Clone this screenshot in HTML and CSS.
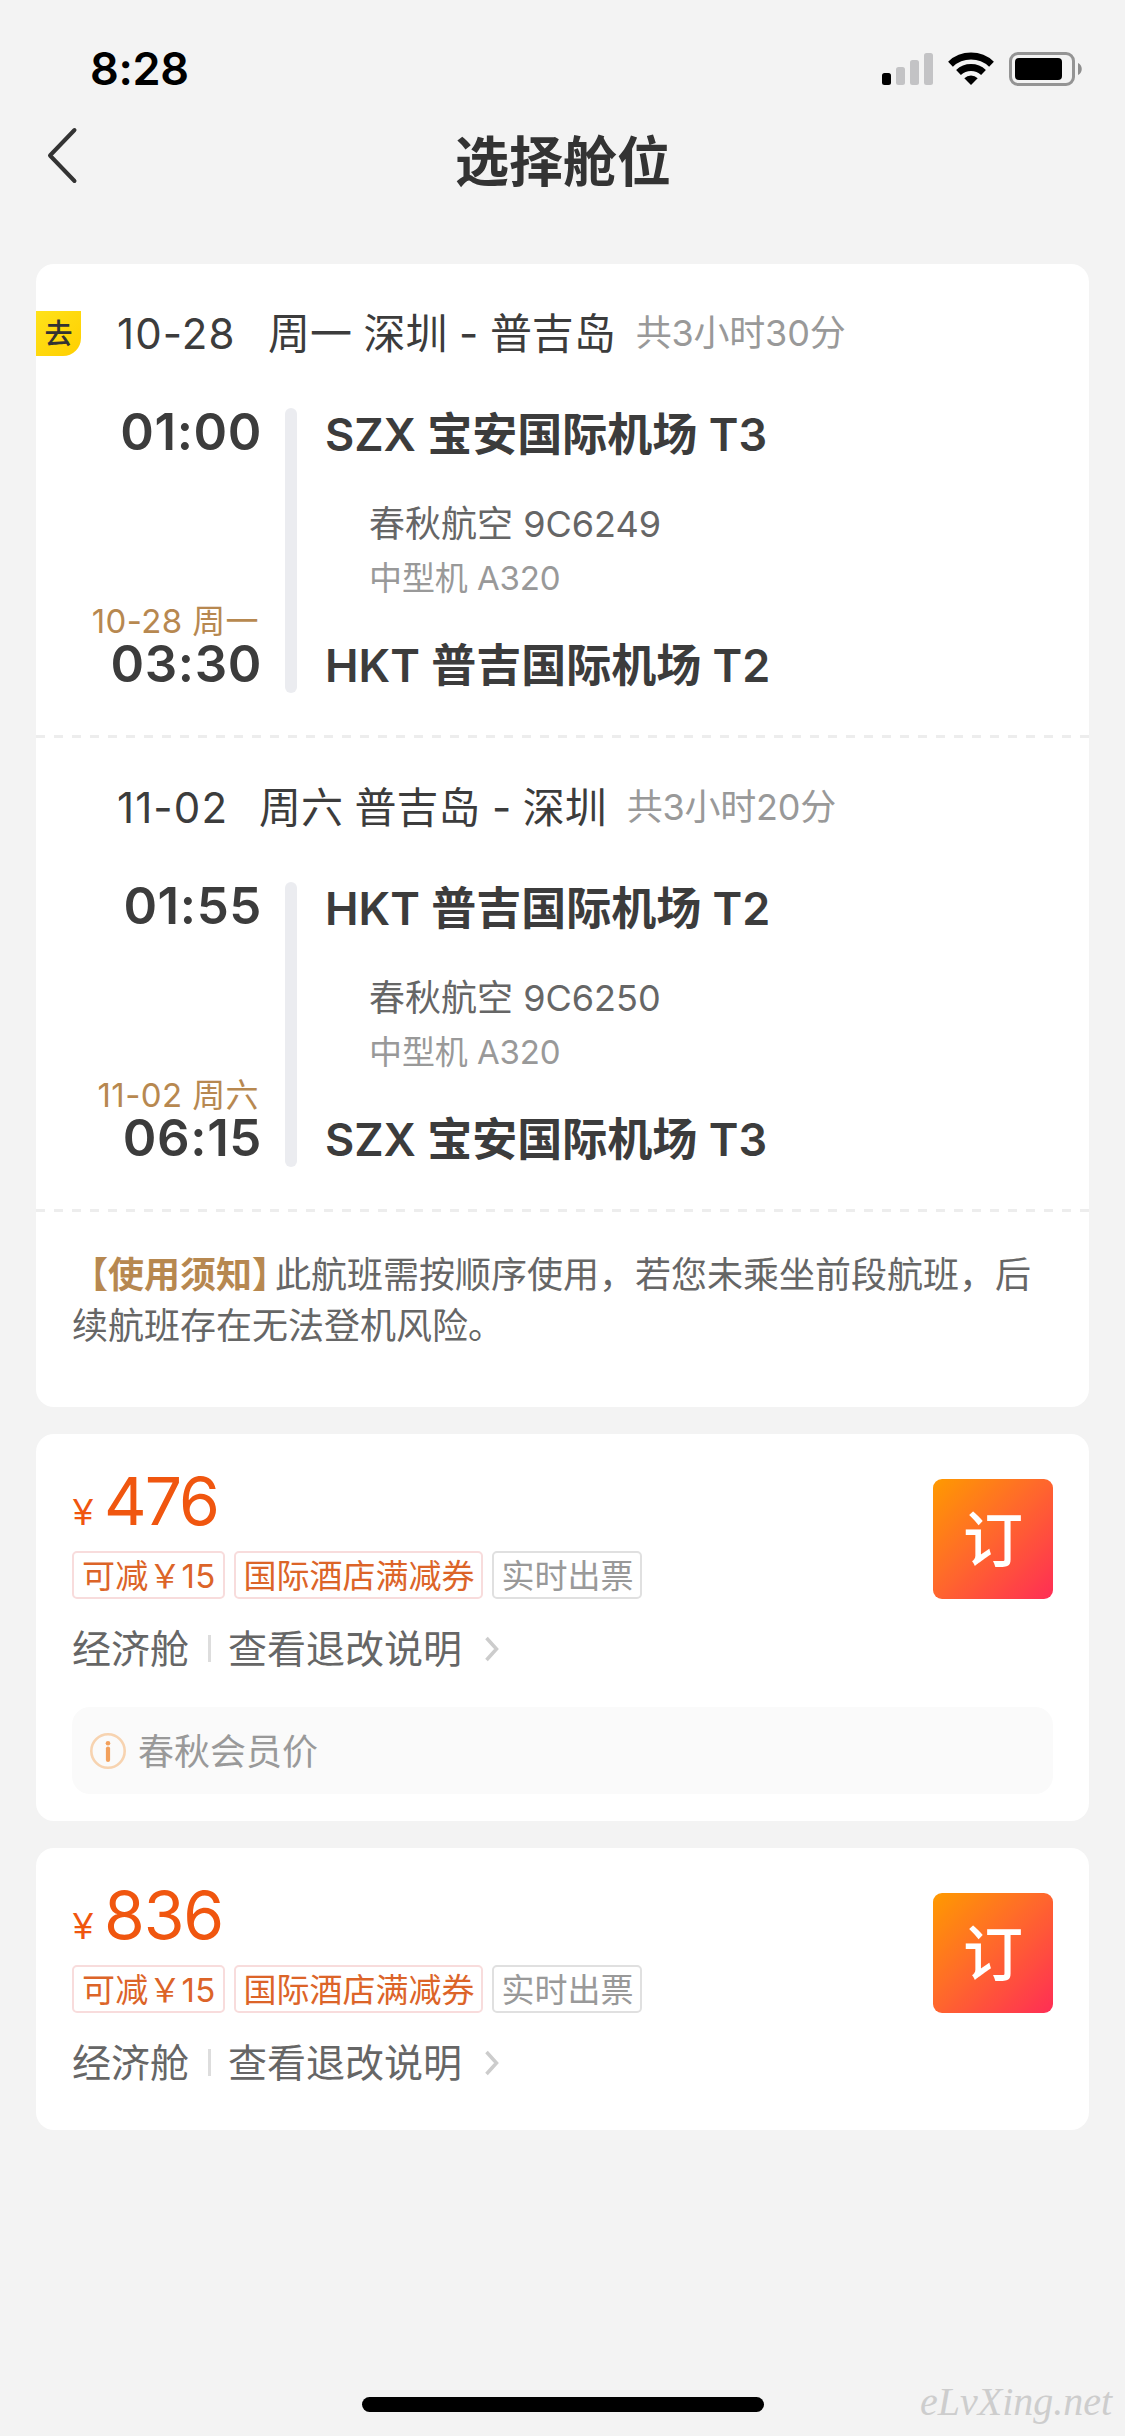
FILE: index.html
```html
<!DOCTYPE html>
<html lang="zh-CN">
<head>
<meta charset="utf-8">
<title>选择舱位</title>
<link rel="stylesheet" href="styles.css">
</head>
<body>
<div class="status-bar">
  <span class="clock">8:28</span>
  <svg class="status-icons" width="202" height="36" viewBox="0 0 202 36">
    <rect x="0" y="21" width="9" height="12" rx="2.5"/>
    <g fill="#c3c3c5">
      <rect x="14" y="15" width="9" height="18" rx="2.5"/>
      <rect x="28" y="8" width="9" height="25" rx="2.5"/>
      <rect x="42" y="1" width="9" height="32" rx="2.5"/>
    </g>
    <g fill="none" stroke="#000" stroke-width="7">
      <path d="M68.5 12.2A30 30 0 0 1 109.500 12.200"/>
      <path d="M76.500 20.500A18.300 18.300 0 0 1 101.500 20.500"/>
    </g>
    <path d="M82.300 26.200A10 10 0 0 1 95.700 26.200L89 33Z"/>
    <rect x="128.500" y="1.500" width="63" height="31" rx="7.500" fill="none" stroke="#949494" stroke-width="3"/>
    <rect x="133" y="6" width="47" height="22" rx="4"/>
    <path d="M196 11C201 13 201 21 196 23Z" fill="#8e8e8e"/>
  </svg>
</div>
<header class="nav-bar">
  <svg class="back" width="32" height="58" viewBox="0 0 32 58"><path d="M28.500 3L4 28.500L28.500 54" fill="none" stroke="#333" stroke-width="4" stroke-linecap="round" stroke-linejoin="round"/></svg>
  <h1 class="title">选择舱位</h1>
</header>
<main class="cards">
  <section class="card">
    <article class="flight">
      <div class="flight-head">
        <span class="badge">去</span>
        <span class="date">10-28</span>
        <span class="route">周一 深圳 - 普吉岛</span>
        <span class="duration">共3小时30分</span>
      </div>
      <div class="flight-body">
        <div class="times">
          <span class="time">01:00</span>
          <span class="arrive-date">10-28 周一</span>
          <span class="time">03:30</span>
        </div>
        <div class="rail"></div>
        <div class="stops">
          <span class="airport">SZX 宝安国际机场 T3</span>
          <span class="airline">春秋航空 9C6249</span>
          <span class="plane">中型机 A320</span>
          <span class="airport">HKT 普吉国际机场 T2</span>
        </div>
      </div>
    </article>
    <article class="flight">
      <div class="flight-head">
        <span class="date return">11-02</span>
        <span class="route">周六 普吉岛 - 深圳</span>
        <span class="duration">共3小时20分</span>
      </div>
      <div class="flight-body">
        <div class="times">
          <span class="time">01:55</span>
          <span class="arrive-date">11-02 周六</span>
          <span class="time">06:15</span>
        </div>
        <div class="rail"></div>
        <div class="stops">
          <span class="airport">HKT 普吉国际机场 T2</span>
          <span class="airline">春秋航空 9C6250</span>
          <span class="plane">中型机 A320</span>
          <span class="airport">SZX 宝安国际机场 T3</span>
        </div>
      </div>
    </article>
    <p class="notice"><b>【使用须知<span class="close">】</span></b>此航班需按顺序使用，若您未乘坐前段航班，后<br>续航班存在无法登机风险。</p>
  </section>

  <section class="card fare">
    <div class="fare-main">
      <div class="fare-info">
        <div class="price"><span class="yen">¥</span><span class="amount seven">476</span></div>
        <div class="tags"><span class="tag wide">可减￥15</span><span class="tag">国际酒店满减券</span><span class="tag plain">实时出票</span></div>
      </div>
      <button class="book">订</button>
    </div>
    <div class="rules"><span>经济舱</span><i class="divider"></i><span>查看退改说明</span><svg class="more" width="16" height="28" viewBox="0 0 16 28"><path d="M2.500 3L12.500 14L2.500 25" fill="none" stroke="#ccc" stroke-width="3.500"/></svg></div>
    <div class="member">
      <svg width="36" height="36" viewBox="0 0 36 36"><circle cx="18" cy="18" r="16.700" fill="none" stroke="#f7d3b0" stroke-width="2.600"/><circle cx="18" cy="10.200" r="2.300" fill="#f2a05c"/><path d="M18 15.500V27" stroke="#f2a05c" stroke-width="4.200" stroke-linecap="round"/></svg>
      <span class="member-label">春秋会员价</span>
    </div>
  </section>

  <section class="card fare">
    <div class="fare-main">
      <div class="fare-info">
        <div class="price"><span class="yen">¥</span><span class="amount">836</span></div>
        <div class="tags"><span class="tag wide">可减￥15</span><span class="tag">国际酒店满减券</span><span class="tag plain">实时出票</span></div>
      </div>
      <button class="book">订</button>
    </div>
    <div class="rules"><span>经济舱</span><i class="divider"></i><span>查看退改说明</span><svg class="more" width="16" height="28" viewBox="0 0 16 28"><path d="M2.500 3L12.500 14L2.500 25" fill="none" stroke="#ccc" stroke-width="3.500"/></svg></div>
  </section>
</main>
<footer class="bottom">
  <div class="home-indicator"></div>
  <span class="watermark">eLvXing.net</span>
</footer>
</body>
</html>
```
FILE: styles.css
```css
* { box-sizing: border-box; }

body {
  margin: 0;
  width: 1125px;
  height: 2436px;
  display: flex;
  flex-direction: column;
  background: #f3f3f3;
  color: #3c3c3c;
  font-family: Inter, "Noto Sans CJK SC", sans-serif;
  white-space: nowrap;
  overflow: hidden;
}

.status-bar {
  height: 120px;
  padding: 39px 41px 0 90px;
  display: flex;
  justify-content: space-between;
}
.clock { color: #000; font-size: 45px; font-weight: 600; line-height: 60px; letter-spacing: -0.3px; }
.status-icons { margin-top: 13px; }

.nav-bar {
  height: 144px;
  padding: 7px 45px 0 46px;
  display: grid;
  grid-template-columns: 32px 1fr 32px;
  align-items: start;
}
.title {
  margin: 0;
  padding-top: 6px;
  font-size: 54px;
  font-weight: 700;
  line-height: 60px;
  text-align: center;
  color: #333;
}

.cards { display: flex; flex-direction: column; gap: 27px; padding: 0 36px; }
.card { background: #fff; border-radius: 18px; overflow: hidden; }

/* flight legs */
.flight {
  height: 474px;
  padding-bottom: 3px;
  background: repeating-linear-gradient(90deg, #ededed 0 9px, transparent 9px 18px) left bottom / 100% 3px no-repeat;
}
.flight-head { height: 141px; padding-top: 47px; display: flex; align-items: flex-start; line-height: 45px; }
.badge {
  width: 45px;
  height: 45px;
  border-radius: 0 0 18px 0;
  background: linear-gradient(135deg, #ffe21a, #ffcf00);
  color: #333;
  font-size: 28px;
  font-weight: 500;
  line-height: 46px;
  text-align: center;
}
.date { width: 151px; margin-left: 36px; font-size: 42px; letter-spacing: 1.1px; }
.date.return { width: 142px; margin-left: 81px; }
.route { font-size: 42px; letter-spacing: -0.1px; }
.duration { margin-left: 20px; font-size: 36px; letter-spacing: -0.2px; color: #999; }

.flight-body { height: 291px; display: flex; }
.times { width: 226px; padding-top: 2px; display: flex; flex-direction: column; align-items: flex-end; }
.time { font-size: 51px; font-weight: 600; line-height: 50px; letter-spacing: 0.6px; }
.arrive-date { margin: 143px 3px 0 0; font-size: 33px; line-height: 42px; height: 39px; letter-spacing: 0.4px; color: #b78850; }
.rail { width: 12px; height: 285px; margin: 3px 28px 0 23px; border-radius: 6px; background: #ebecf0; }
.stops { display: flex; flex-direction: column; padding-top: 5px; }
.airport { font-size: 45px; font-weight: 600; line-height: 50px; }
.airline { margin: 37px 0 0 44px; font-size: 36px; line-height: 54px; color: #666; }
.plane { margin: 0 0 36px 44px; font-size: 33px; line-height: 54px; letter-spacing: -0.1px; color: #999; }

.notice { height: 195px; margin: 0; padding: 38px 36px 0; font-size: 36px; line-height: 51px; color: #666; }
.notice b { font-weight: 700; color: #b78850; }
.close { letter-spacing: -13px; }

/* fares */
.fare { padding: 0 36px; }
.fare-main { height: 165px; display: flex; justify-content: space-between; }
.price { height: 117px; padding-top: 27px; display: flex; align-items: baseline; color: #f0560f; line-height: 80px; }
.yen { width: 32px; padding-left: 1px; font-family: "Liberation Sans", sans-serif; font-size: 36px; }
.amount { font-size: 66px; letter-spacing: -1.2px; }
.amount.seven { letter-spacing: -2px; }
.tags { display: flex; gap: 9px; }
.tag {
  height: 48px;
  padding: 0 7px;
  border: 2px solid #f8dcdc;
  border-radius: 5px;
  font-size: 33px;
  line-height: 46px;
  color: #dc6428;
}
.tag.wide { padding: 0 8px; letter-spacing: 0.2px; }
.tag.plain { border-color: #e0e0e0; color: #999; }
.book {
  width: 120px;
  height: 120px;
  margin-top: 45px;
  padding: 0 0 6px;
  border: 0;
  border-radius: 9px;
  background: linear-gradient(135deg, #ff9a00, #ff6a2a 45%, #ff2d55);
  color: #fff;
  font: 500 60px/114px "Noto Sans CJK SC", sans-serif;
}
.rules { height: 117px; padding-top: 20px; display: flex; align-items: flex-start; font-size: 39px; line-height: 60px; color: #666; }
.divider { width: 3px; height: 27px; margin: 16px 17px 0 19px; background: #ddd; }
.more { margin: 16px 0 0 22px; }
.member {
  height: 87px;
  margin: -9px 0 27px;
  padding-left: 18px;
  display: flex;
  align-items: center;
  gap: 12px;
  border-radius: 18px;
  background: #fafafa;
  font-size: 36px;
  color: #999;
}
.member-label { padding-bottom: 3px; }

.bottom {
  margin-top: auto;
  height: 60px;
  display: grid;
  grid-template-columns: 362px 402px 1fr;
}
.home-indicator { grid-column: 2; height: 15px; margin-top: 21px; border-radius: 7.500px; background: #000; }
.watermark {
  padding-left: 156px;
  color: #cdcdcd;
  font: italic 40px/52px "Liberation Serif", serif;
}
```
